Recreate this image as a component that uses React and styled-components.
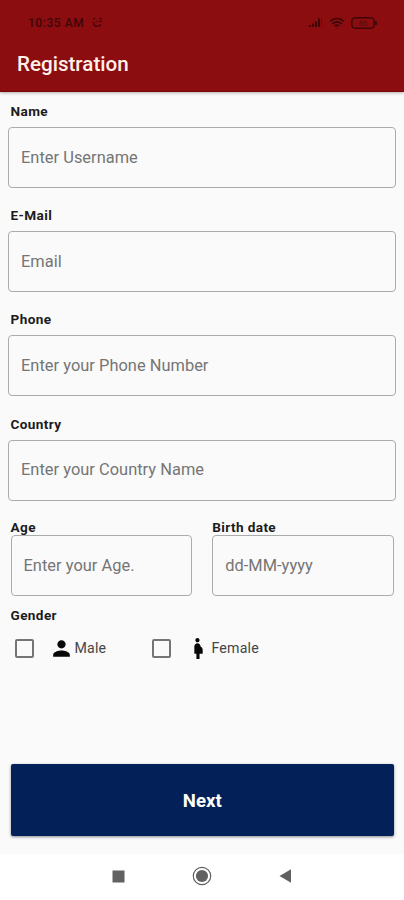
import React from "react";
import styled, { createGlobalStyle, css } from "styled-components";
import { MdPerson, MdPregnantWoman } from "react-icons/md";

const colors = {
    primary: "#8b0d0f",
    navy: "#032158",
    background: "#fafafa",
    border: "#acacac",
    hint: "#757575",
    text: "#1c1c1c",
    nav: "#616161",
    status: "#3f0608"
};

const GlobalStyle = createGlobalStyle`
    * {
        box-sizing: border-box;
    }
    body {
        margin: 0;
        background: ${colors.background};
        font-family: Roboto, "Liberation Sans", sans-serif;
    }
`;

const Screen = styled.div`
    display: flex;
    flex-direction: column;
    width: 404px;
    height: 900px;
    overflow: hidden;
    background: ${colors.background};
`;

const Header = styled.header`
    flex: none;
    height: 92px;
    background: ${colors.primary};
    border-bottom: 1px solid #780507;
    box-shadow: 0 1px 3px rgba(0, 0, 0, 0.3);
`;

const StatusBar = styled.div`
    display: flex;
    align-items: center;
    height: 36px;
    padding: 9px 27px 0 28px;
    color: ${colors.status};
`;

const Clock = styled.span`
    margin-right: 8px;
    font-size: 12px;
    font-weight: 500;
    letter-spacing: 0.55px;
`;

const StatusIcons = styled.div`
    display: flex;
    align-items: center;
    gap: 6px;
    margin-left: auto;
`;

const Title = styled.h1`
    margin: 0;
    padding-left: 17px;
    color: #fff0ea;
    font-size: 20.6px;
    font-weight: 500;
    line-height: 56px;
`;

const Form = styled.main`
    display: flex;
    flex: 1;
    flex-direction: column;
    padding: 9px 8px 18px;
`;

const Label = styled.label`
    display: block;
    height: 18px;
    padding-left: ${props => (props.$compact ? 0 : "2.5px")};
    color: ${colors.text};
    font-size: 13.6px;
    font-weight: 700;
    line-height: ${props => (props.$compact ? "18px" : "20px")};
    letter-spacing: 0.38px;
`;

const Field = styled.div`
    flex: ${props => (props.$compact ? 1 : "none")};
    height: ${props => (props.$compact ? "79px" : "104.2px")};
`;

const Input = styled.input`
    display: block;
    width: 100%;
    height: 61px;
    margin-top: 8px;
    padding: 0 12px 1px;
    border: 1px solid ${colors.border};
    border-radius: 4px;
    outline: 0;
    background: transparent;
    color: ${colors.text};
    font-family: inherit;
    font-size: 16.4px;
    letter-spacing: 0.03px;

    &::placeholder {
        color: ${colors.hint};
        opacity: 1;
    }

    ${props =>
        props.$compact &&
        css`
            margin-top: -0.5px;
        `}
`;

const FieldRow = styled.div`
    display: flex;
    gap: 20px;
    padding: 0 2px 0 2.5px;
`;

const GenderLabel = styled(Label)`
    margin-top: 9px;
    line-height: 18px;
`;

const Options = styled.div`
    display: flex;
    margin-top: 15px;
    padding-left: 7.4px;
`;

const Option = styled.label`
    display: flex;
    align-items: center;
    width: 137px;
    height: 19px;
    color: #454545;
    font-size: 14.2px;
    letter-spacing: 0.2px;
`;

const Checkbox = styled.input`
    appearance: none;
    flex: none;
    width: 19px;
    height: 19px;
    margin: 0;
    border: 2px solid #757575;
    border-radius: 2px;
`;

const OptionIcon = styled.span`
    display: flex;
    flex: none;
    margin: 0 0 0 15px;
    color: #080808;
`;

const NextButton = styled.button`
    height: 72px;
    margin: auto 2px 0 2.5px;
    padding: 2px 0 0;
    border: 0;
    border-radius: 2px;
    background: ${colors.navy};
    box-shadow: 0 1px 3px rgba(0, 0, 0, 0.45);
    color: #fff;
    font-family: inherit;
    font-size: 18.6px;
    font-weight: 700;
`;

const NavBar = styled.nav`
    display: flex;
    flex: none;
    align-items: center;
    justify-content: space-between;
    height: 46px;
    padding: 0 112px 2px 112px;
    background: #fff;
`;

const AlarmIcon = () => (
    <svg width="11" height="11" viewBox="0 0 11 11" fill="none" stroke="currentColor" strokeWidth="1.3">
        <path d="M1.5 5v.8a3.4 3.4 0 0 0 3.4 3.4h1.2A3.4 3.4 0 0 0 9 7.4M3.6 4.4h1.6M1 2.6L3 1M7.6 1l2 1.6M6.8 4.4h2.8" />
    </svg>
);

const SignalIcon = () => (
    <svg width="15" height="11" viewBox="0 0 15 11" fill="currentColor">
        <path d="M1 8h2v2H1zM4 6.5h2V10H4zM7 4.5h2V10H7zM10 1.5h2V10h-2z" />
        <path d="M13 1h1v9h-1z" opacity="0.4" />
    </svg>
);

const WifiIcon = () => (
    <svg width="16" height="12" viewBox="0 0 16 12" fill="none" stroke="currentColor" strokeWidth="1.6">
        <path d="M1 4.4a10 10 0 0 1 14 0M3.3 6.8a6.8 6.8 0 0 1 9.4 0M5.7 9.1a3.5 3.5 0 0 1 4.6 0" />
        <circle cx="8" cy="10.8" r="0.6" fill="currentColor" stroke="none" />
    </svg>
);

const BatteryIcon = () => (
    <svg width="26" height="12" viewBox="0 0 26 12" fill="none" stroke="currentColor">
        <rect x="0.8" y="0.8" width="22.4" height="10.4" rx="3.5" strokeWidth="1.5" />
        <path d="M25 4v4" strokeWidth="1.7" />
        <text x="12" y="8.7" textAnchor="middle" fontSize="7.5" fill="currentColor" stroke="none" opacity="0.75">
            60
        </text>
    </svg>
);

const fields = [
    { label: "Name", hint: "Enter Username" },
    { label: "E-Mail", hint: "Email" },
    { label: "Phone", hint: "Enter your Phone Number" },
    { label: "Country", hint: "Enter your Country Name" }
];

const FormField = ({ label, hint, compact }) => (
    <Field $compact={compact}>
        <Label htmlFor={label} $compact={compact}>
            {label}
        </Label>
        <Input id={label} placeholder={hint} $compact={compact} />
    </Field>
);

const App = () => (
    <Screen>
        <GlobalStyle />
        <Header>
            <StatusBar>
                <Clock>10:35 AM</Clock>
                <AlarmIcon />
                <StatusIcons>
                    <SignalIcon />
                    <WifiIcon />
                    <BatteryIcon />
                </StatusIcons>
            </StatusBar>
            <Title>Registration</Title>
        </Header>
        <Form>
            {fields.map(field => (
                <FormField key={field.label} {...field} />
            ))}
            <FieldRow>
                <FormField label="Age" hint="Enter your Age." compact />
                <FormField label="Birth date" hint="dd-MM-yyyy" compact />
            </FieldRow>
            <GenderLabel as="div">Gender</GenderLabel>
            <Options>
                <Option>
                    <Checkbox type="checkbox" />
                    <OptionIcon>
                        <MdPerson size={25} />
                    </OptionIcon>
                    Male
                </Option>
                <Option>
                    <Checkbox type="checkbox" />
                    <OptionIcon>
                        <MdPregnantWoman size={25} />
                    </OptionIcon>
                    Female
                </Option>
            </Options>
            <NextButton>Next</NextButton>
        </Form>
        <NavBar>
            <svg width="13" height="13" viewBox="0 0 13 13" fill={colors.nav}>
                <rect x="0.5" y="0.5" width="12" height="12" />
            </svg>
            <svg width="20" height="20" viewBox="0 0 20 20" fill={colors.nav}>
                <circle cx="10" cy="10" r="8.7" fill="none" stroke={colors.nav} strokeWidth="1.2" />
                <circle cx="10" cy="10" r="6.1" />
            </svg>
            <svg width="13" height="14" viewBox="0 0 13 14" fill={colors.nav}>
                <path d="M0.5 7L12 0.3v13.4z" />
            </svg>
        </NavBar>
    </Screen>
);

export default App;
